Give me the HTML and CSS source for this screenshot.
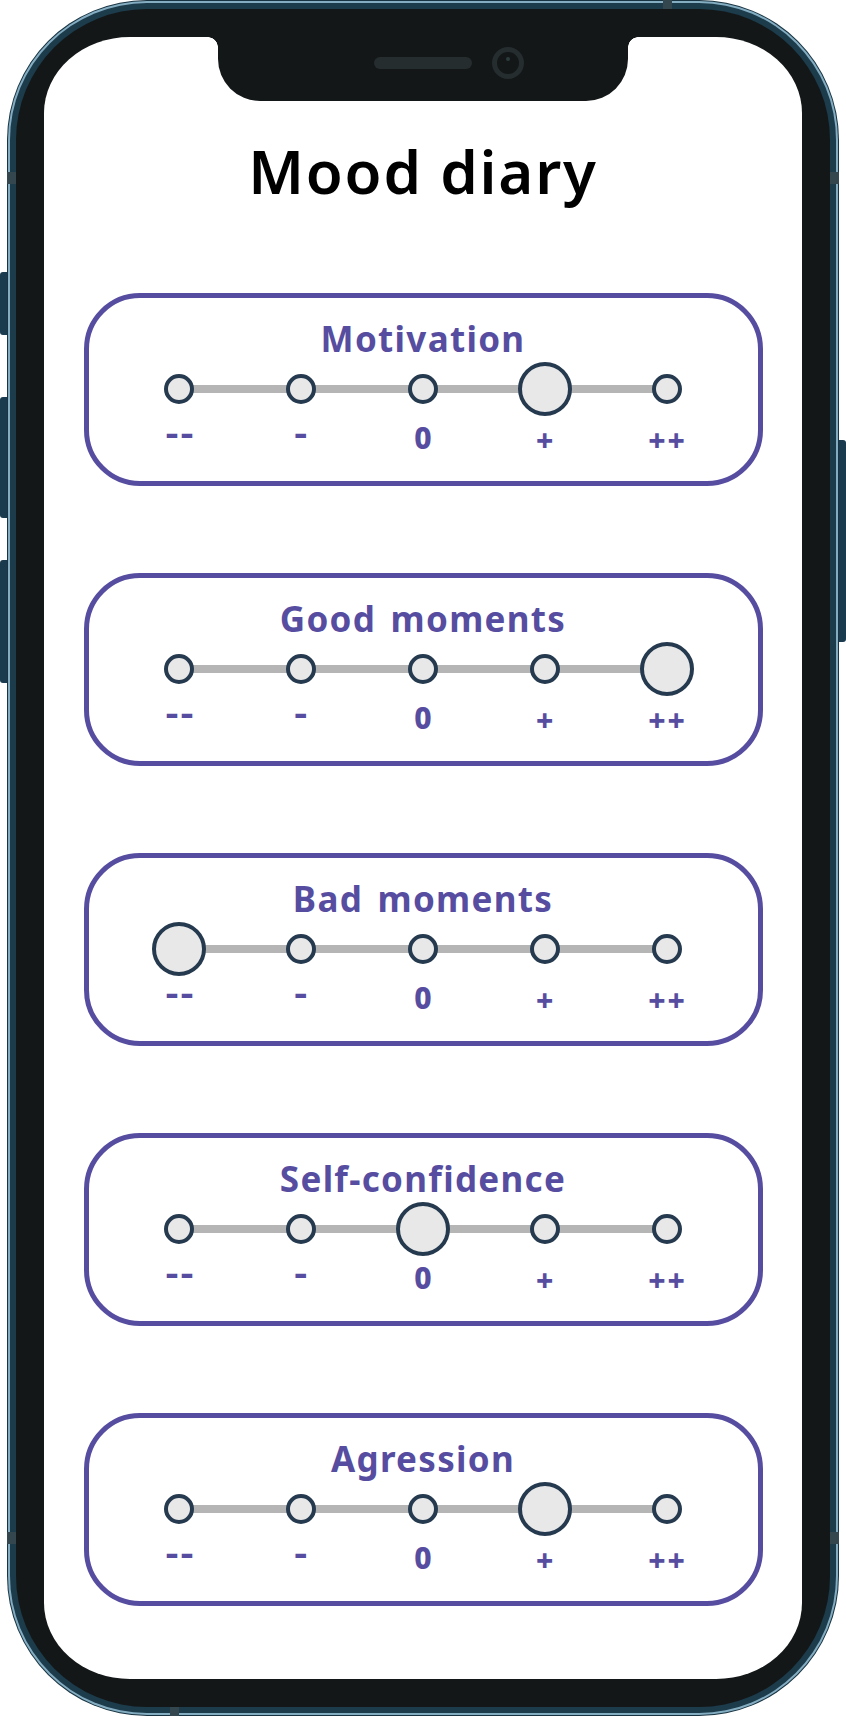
FILE: index.html
```html
<!DOCTYPE html>
<html lang="en">
<head>
<meta charset="utf-8">
<title>Mood diary</title>
<link rel="stylesheet" href="styles.css">
</head>
<body>
<div class="device">
  <div class="side side-left">
    <span class="hw-btn hw-btn-1"></span>
    <span class="hw-btn hw-btn-2"></span>
    <span class="hw-btn hw-btn-3"></span>
  </div>
  <div class="phone">
    <span class="ant ant-l1"></span><span class="ant ant-r1"></span>
    <span class="ant ant-l2"></span><span class="ant ant-r2"></span>
    <span class="ant ant-t"></span><span class="ant ant-b"></span>
    <div class="phone-line">
      <div class="phone-band">
        <div class="bezel">
          <div class="screen">
            <div class="notch">
              <span class="speaker"></span>
              <span class="camera"><span class="lens"></span></span>
            </div>
            <h1 class="title">Mood diary</h1>
            <div class="cards">
              <section class="card">
                <h2 class="card-title">Motivation</h2>
                <div class="scale">
                  <span class="dot"></span><span class="dot"></span><span class="dot"></span><span class="dot dot-on"></span><span class="dot"></span>
                </div>
                <div class="labels"><span class="lbl lbl-dash">--</span><span class="lbl lbl-dash">-</span><span class="lbl">0</span><span class="lbl lbl-plus">+</span><span class="lbl lbl-plus">++</span></div>
              </section>
              <section class="card">
                <h2 class="card-title">Good moments</h2>
                <div class="scale">
                  <span class="dot"></span><span class="dot"></span><span class="dot"></span><span class="dot"></span><span class="dot dot-on"></span>
                </div>
                <div class="labels"><span class="lbl lbl-dash">--</span><span class="lbl lbl-dash">-</span><span class="lbl">0</span><span class="lbl lbl-plus">+</span><span class="lbl lbl-plus">++</span></div>
              </section>
              <section class="card">
                <h2 class="card-title">Bad moments</h2>
                <div class="scale">
                  <span class="dot dot-on"></span><span class="dot"></span><span class="dot"></span><span class="dot"></span><span class="dot"></span>
                </div>
                <div class="labels"><span class="lbl lbl-dash">--</span><span class="lbl lbl-dash">-</span><span class="lbl">0</span><span class="lbl lbl-plus">+</span><span class="lbl lbl-plus">++</span></div>
              </section>
              <section class="card">
                <h2 class="card-title">Self-confidence</h2>
                <div class="scale">
                  <span class="dot"></span><span class="dot"></span><span class="dot dot-on"></span><span class="dot"></span><span class="dot"></span>
                </div>
                <div class="labels"><span class="lbl lbl-dash">--</span><span class="lbl lbl-dash">-</span><span class="lbl">0</span><span class="lbl lbl-plus">+</span><span class="lbl lbl-plus">++</span></div>
              </section>
              <section class="card">
                <h2 class="card-title">Agression</h2>
                <div class="scale">
                  <span class="dot"></span><span class="dot"></span><span class="dot"></span><span class="dot dot-on"></span><span class="dot"></span>
                </div>
                <div class="labels"><span class="lbl lbl-dash">--</span><span class="lbl lbl-dash">-</span><span class="lbl">0</span><span class="lbl lbl-plus">+</span><span class="lbl lbl-plus">++</span></div>
              </section>
            </div>
          </div>
        </div>
      </div>
    </div>
  </div>
  <div class="side side-right">
    <span class="hw-btn hw-btn-r"></span>
  </div>
</div>
</body>
</html>
```

FILE: styles.css
```css
* { box-sizing: border-box; }

html, body {
  margin: 0;
  padding: 0;
  background: #ffffff;
}

body {
  font-family: "Noto Sans", "DejaVu Sans", sans-serif;
  width: 846px;
  height: 1716px;
  overflow: hidden;
}

.device {
  display: flex;
  width: 846px;
  height: 1716px;
}

.side {
  width: 7px;
  display: flex;
  flex-direction: column;
}

.side-left { padding-top: 272px; }
.side-right { padding-top: 440px; }

.hw-btn {
  display: block;
  width: 7px;
  background: #1a3a4d;
}

.side-left .hw-btn { border-radius: 3px 0 0 3px; }
.side-right .hw-btn { border-radius: 0 3px 3px 0; }

.hw-btn-1 { height: 63px; }
.hw-btn-2 { height: 121px; margin-top: 62px; }
.hw-btn-3 { height: 123px; margin-top: 42px; }
.hw-btn-r { height: 202px; }

.phone {
  position: relative;
  width: 832px;
  height: 1716px;
  border-radius: 140px;
  background: #183341;
  padding: 1px;
}

.phone-line {
  height: 100%;
  border-radius: 139px;
  background: #84adc2;
  padding: 2px;
}

.phone-band {
  height: 100%;
  border-radius: 137px;
  background: #1c3b4b;
  padding: 6px;
}

.bezel {
  height: 100%;
  border-radius: 131px;
  background: #131718;
  padding: 28px;
}

.screen {
  position: relative;
  height: 100%;
  background: #ffffff;
  border-radius: 86px / 76px;
  display: flex;
  flex-direction: column;
  align-items: center;
}

/* antenna bands on the frame */
.ant {
  position: absolute;
  background: #34474f;
  z-index: 2;
}
.ant-l1 { left: 0; top: 172px; width: 9px; height: 12px; }
.ant-r1 { right: 0; top: 172px; width: 9px; height: 12px; }
.ant-l2 { left: 0; top: 1532px; width: 9px; height: 12px; }
.ant-r2 { right: 0; top: 1532px; width: 9px; height: 12px; }
.ant-t { top: 0; left: 656px; width: 9px; height: 9px; }
.ant-b { bottom: 0; left: 163px; width: 9px; height: 9px; }

/* notch */
.notch {
  position: absolute;
  top: 0;
  left: 174px;
  width: 410px;
  height: 64px;
  background: #131718;
  border-radius: 0 0 42px 42px;
}
.notch::before,
.notch::after {
  content: "";
  position: absolute;
  top: 0;
  width: 10px;
  height: 10px;
}
.notch::before {
  left: -10px;
  background: radial-gradient(circle at 0 100%, transparent 9.5px, #131718 10px);
}
.notch::after {
  right: -10px;
  background: radial-gradient(circle at 100% 100%, transparent 9.5px, #131718 10px);
}

.speaker {
  position: absolute;
  left: 156px;
  top: 20px;
  width: 98px;
  height: 12px;
  border-radius: 6px;
  background: #252d2f;
}

.camera {
  position: absolute;
  left: 274px;
  top: 10px;
  width: 32px;
  height: 32px;
  border-radius: 50%;
  border: 5px solid #252d2f;
  background: #131718;
}

.lens {
  position: absolute;
  left: 9px;
  top: 5px;
  width: 4px;
  height: 4px;
  border-radius: 50%;
  background: #2e3b3e;
}

/* content */
.title {
  margin: 104px 0 0;
  font-size: 60px;
  line-height: 60px;
  font-weight: 600;
  color: #000000;
  letter-spacing: 1.8px;
  text-align: center;
}

.cards {
  margin-top: 92px;
  width: 679px;
  display: flex;
  flex-direction: column;
  gap: 87px;
}

.card {
  height: 193px;
  border: 5px solid #564da1;
  border-radius: 56px;
  padding-top: 23px;
  display: flex;
  flex-direction: column;
  align-items: center;
}

.card-title {
  margin: 0;
  font-size: 35px;
  line-height: 36px;
  font-weight: 700;
  color: #564da1;
  letter-spacing: 1.3px;
  word-spacing: 4px;
}

.scale {
  position: relative;
  margin-top: 5px;
  width: 609px;
  height: 54px;
  display: grid;
  grid-template-columns: repeat(5, 1fr);
  align-items: center;
  justify-items: center;
}

.scale::before {
  content: "";
  position: absolute;
  left: 61px;
  right: 61px;
  top: 23px;
  height: 8px;
  background: #b5b5b5;
}

.dot {
  position: relative;
  width: 30px;
  height: 30px;
  border-radius: 50%;
  background: #e8e8e8;
  border: 4.5px solid #263a4f;
}

.dot-on {
  width: 54px;
  height: 54px;
}

.labels {
  margin-top: 7px;
  width: 609px;
  display: grid;
  grid-template-columns: repeat(5, 1fr);
  justify-items: center;
}

.lbl {
  font-size: 30px;
  line-height: 30px;
  font-weight: 800;
  color: #564da1;
}

.lbl-dash {
  letter-spacing: 2px;
  padding-left: 2px;
  transform: translateY(-5px) scaleX(1.3);
}

.lbl-plus {
  letter-spacing: 2px;
  padding-left: 2px;
  transform: translateY(2px);
}
```
